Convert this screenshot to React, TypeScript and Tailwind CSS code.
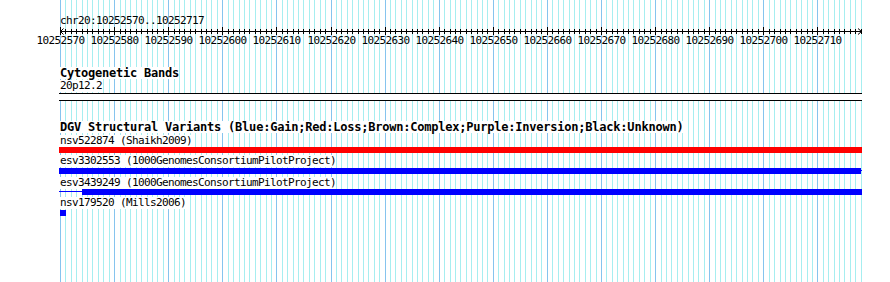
const S = 5.41;
const X0 = 60;
const xs = Array.from({ length: 149 }, (_, i) => Math.round(X0 + i * S));
const majors = xs.map((x, i) => ({ x, i })).filter((d) => d.i % 10 === 0);

function Label({ children, bold = false }: { children: React.ReactNode; bold?: boolean }) {
  return (
    <div className="ml-[60px] h-[12px]">
      <span
        className={
          bold
            ? "inline-block bg-white font-bold text-[12px] tracking-[-0.22px] leading-[12px]"
            : "inline-block bg-white leading-[12px]"
        }
      >
        {children}
      </span>
    </div>
  );
}

export default function App() {
  return (
    <div className="relative w-[890px] h-[282px] overflow-hidden bg-white text-black font-['DejaVu_Sans_Mono',monospace] text-[11px] leading-[12px] tracking-[-0.62px]">
      <svg className="absolute inset-0" width={890} height={282} shapeRendering="crispEdges">
        {xs.map((x, i) => (
          <line
            key={i}
            x1={x + 0.5}
            x2={x + 0.5}
            y1={0}
            y2={282}
            stroke={i % 10 === 0 ? "#86c4ee" : "#a6eef0"}
            strokeWidth={1}
          />
        ))}
      </svg>
      <div className="relative flex flex-col pt-[15px]">
        <div className="ml-[60px] h-[12px]">chr20:10252570..10252717</div>
        <svg width={890} height={20} className="block">
          <g shapeRendering="crispEdges" stroke="#000" strokeWidth={1}>
            <line x1={60} x2={861} y1={4.5} y2={4.5} />
            {xs.map((x, i) =>
              i % 10 === 0 ? (
                <line key={i} x1={x + 0.5} x2={x + 0.5} y1={0} y2={8} />
              ) : (
                <line key={i} x1={x + 0.5} x2={x + 0.5} y1={2} y2={7} />
              )
            )}
          </g>
          <polyline points="63.5,1.5 60.5,4.5 63.5,7.5" fill="none" stroke="#000" strokeWidth={1} />
          <polyline points="858,1.5 861.5,4.5 858,7.5" fill="none" stroke="#000" strokeWidth={1} />
          {majors.map(({ x, i }) => (
            <text
              key={i}
              x={x + 0.5}
              y={17}
              textAnchor="middle"
              fontFamily="DejaVu Sans Mono, monospace"
              fontSize={11}
              letterSpacing={-0.62}
              fill="#000"
            >
              {10252570 + i}
            </text>
          ))}
        </svg>

        <div className="mt-[20px]">
          <Label bold>Cytogenetic Bands</Label>
        </div>
        <div className="mt-[1px]">
          <Label>20p12.2</Label>
        </div>
        <div className="mt-[1px] ml-[59px] w-[803px] h-[8px] border-y border-black bg-white" />

        <div className="mt-[20px]">
          <Label bold>
            DGV Structural Variants (Blue:Gain;Red:Loss;Brown:Complex;Purple:Inversion;Black:Unknown)
          </Label>
        </div>

        <div className="mt-[2px]">
          <Label>nsv522874 (Shaikh2009)</Label>
        </div>
        <div className="ml-[59px] w-[803px] h-[6px] bg-[#ff0000]" />

        <div className="mt-[2px]">
          <Label>esv3302553 (1000GenomesConsortiumPilotProject)</Label>
        </div>
        <div className="mt-[1px] flex h-[6px]">
          <div className="ml-[59px] w-[802px] h-[6px] bg-[#0000ff]" />
          <div className="mt-[2px] w-[1px] h-[1px] bg-[#0000ff]" />
        </div>

        <div className="mt-[3px]">
          <Label>esv3439249 (1000GenomesConsortiumPilotProject)</Label>
        </div>
        <div className="flex h-[6px]">
          <div className="ml-[59px] mt-[2px] w-[23px] h-[1px] bg-[#0000ff]" />
          <div className="w-[780px] h-[6px] bg-[#0000ff]" />
        </div>

        <div className="mt-[2px]">
          <Label>nsv179520 (Mills2006)</Label>
        </div>
        <div className="mt-[1px] ml-[60px] w-[6px] h-[6px] bg-[#0000ff]" />
      </div>
    </div>
  );
}
